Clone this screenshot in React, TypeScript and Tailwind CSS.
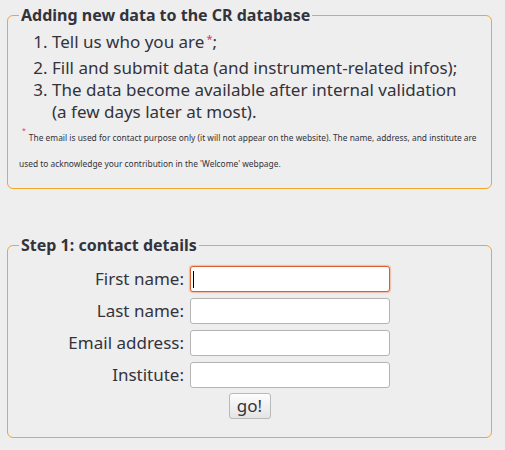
import React from "react";

const font = { fontFamily: "'Noto Sans', 'DejaVu Sans', sans-serif" };

function Field({ label, focused }: { label: string; focused?: boolean }) {
  return (
    <>
      <label className="text-right text-[17px] leading-[26px] whitespace-nowrap">{label}</label>
      <div className="relative h-[26px] w-[200px]">
        <input
          type="text"
          className={
            "h-[26px] w-[200px] rounded-[3px] border bg-white px-[3px] outline-none " +
            (focused
              ? "border-[#d9602e] shadow-[0_0_1px_1px_rgba(240,150,110,0.55)]"
              : "border-[#b4b4b4]")
          }
        />
        {focused && <span className="absolute left-[3px] top-[5px] h-[17px] w-px bg-black" />}
      </div>
    </>
  );
}

export default function App() {
  return (
    <div className="h-[450px] w-[505px] overflow-hidden bg-[#eeeeee] text-[#33333b]" style={font}>
      <fieldset className="ml-[7px] mt-[4px] w-[485px] rounded-[6px] border border-[#f5a623] pl-[11px] pr-[11px] pb-[12px]">
        <legend className="px-[2px] text-[16px] font-bold leading-[22px]">Adding new data to the CR database</legend>
        <ol className="mt-[5px] list-decimal pl-[33px] text-[17px] leading-[22px]">
          <li className="mb-[4px]">
            Tell us who you are<sup className="ml-[2px] text-[11px] text-[#e8305a]">*</sup>;
          </li>
          <li>Fill and submit data (and instrument-related infos);</li>
          <li>
            The data become available after internal validation
            <br />
            (a few days later at most).
          </li>
        </ol>
        <p className="mt-[3px] whitespace-nowrap text-[8.4px] leading-[24.5px]">
          <span className="relative top-[-8px] mx-[3px] text-[7px] text-[#e8305a]">*</span>
          The email is used for contact purpose only (it will not appear on the website). The name, address, and institute are
          <br />
          used to acknowledge your contribution in the 'Welcome' webpage.
        </p>
      </fieldset>

      <fieldset className="ml-[7px] mt-[45px] w-[485px] rounded-[6px] border border-[#f5a623] pl-[11px] pr-[11px] pb-[18px]">
        <legend className="px-[2px] text-[16px] font-bold leading-[22px]">Step 1: contact details</legend>
        <div className="mt-[10px] grid grid-cols-[165px_200px] gap-x-[6px] gap-y-[6px]">
          <Field label="First name:" focused />
          <Field label="Last name:" />
          <Field label="Email address:" />
          <Field label="Institute:" />
        </div>
        <div className="mt-[5px] flex justify-center">
          <button className="h-[26px] w-[42px] rounded-[3px] border border-[#b9b9b9] bg-gradient-to-b from-[#fdfdfd] to-[#e4e4e4] text-[17px] leading-[22px] text-[#33333b]">
            go!
          </button>
        </div>
      </fieldset>
    </div>
  );
}
